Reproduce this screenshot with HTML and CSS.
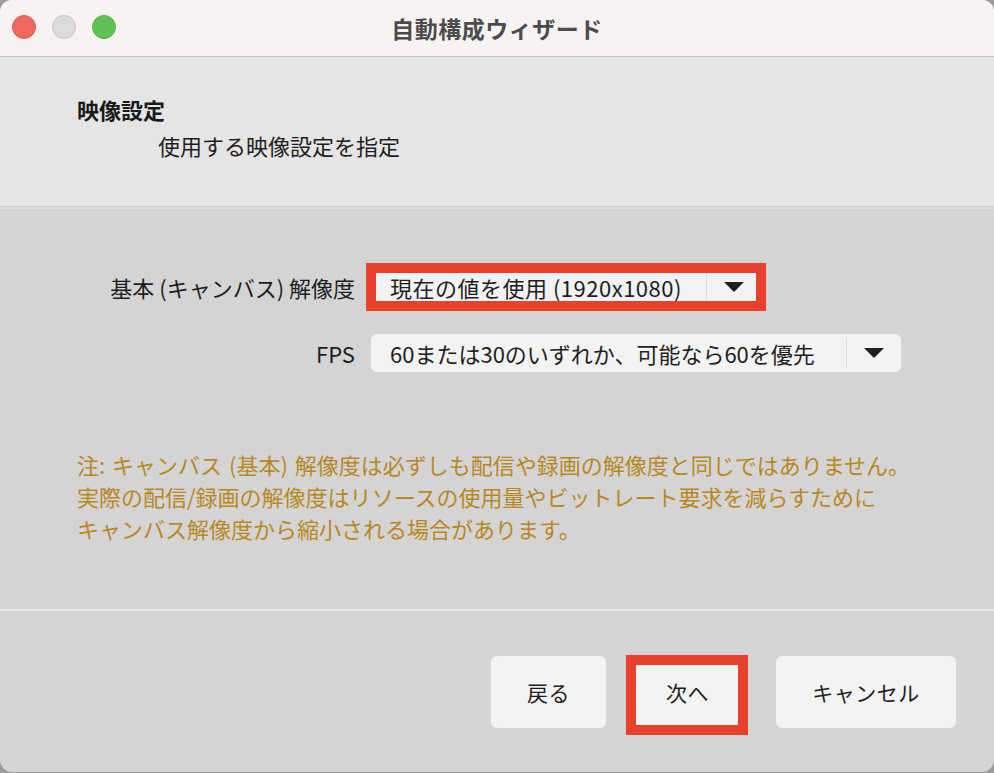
FILE: index.html
```html
<!DOCTYPE html>
<html lang="ja">
<head>
<meta charset="utf-8">
<title>自動構成ウィザード</title>
<link rel="stylesheet" href="styles.css">
</head>
<body>
<div class="window">
  <div class="titlebar">
    <div class="lights">
      <span class="light red"></span>
      <span class="light gray"></span>
      <span class="light green"></span>
    </div>
    <div class="title">自動構成ウィザード</div>
  </div>
  <div class="header">
    <div class="h-title">映像設定</div>
    <div class="h-sub">使用する映像設定を指定</div>
  </div>
  <div class="content">
    <div class="form">
      <div class="label">基本 (キャンバス) 解像度</div>
      <div class="combo combo-res highlight">
        <span class="combo-text">現在の値を使用 (1920x1080)</span>
        <span class="combo-btn"><span class="arrow"></span></span>
      </div>
      <div class="label">FPS</div>
      <div class="combo combo-fps">
        <span class="combo-text">60または30のいずれか、可能なら60を優先</span>
        <span class="combo-btn"><span class="arrow"></span></span>
      </div>
    </div>
    <div class="note">
      <div>注: キャンバス (基本) 解像度は必ずしも配信や録画の解像度と同じではありません。</div>
      <div>実際の配信/録画の解像度はリソースの使用量やビットレート要求を減らすために</div>
      <div>キャンバス解像度から縮小される場合があります。</div>
    </div>
  </div>
  <div class="footer">
    <button class="btn btn-back">戻る</button>
    <button class="btn btn-next">次へ</button>
    <button class="btn btn-cancel">キャンセル</button>
  </div>
</div>
</body>
</html>
```
FILE: styles.css
```css
* { box-sizing: border-box; }
html, body {
  margin: 0;
  padding: 0;
  width: 994px;
  height: 773px;
  background: #9c9c9c;
  overflow: hidden;
}
body {
  font-family: "Noto Sans CJK JP", "Noto Sans", sans-serif;
  color: #1e1e1e;
}
.window {
  width: 994px;
  height: 772px;
  border-radius: 12px;
  overflow: hidden;
  display: flex;
  flex-direction: column;
  background: #d4d4d4;
}
.titlebar {
  height: 57px;
  flex: none;
  background: #f6f3f2;
  border-bottom: 1px solid #c6c4c4;
  position: relative;
  display: flex;
  align-items: center;
  justify-content: center;
}
.lights {
  position: absolute;
  left: 12px;
  top: 15px;
  display: flex;
  gap: 16px;
}
.light {
  width: 24px;
  height: 24px;
  border-radius: 50%;
  display: block;
}
.light.red { background: #ee6a5f; border: 1px solid #d9574d; }
.light.gray { background: #dddbda; border: 1px solid #c8c6c5; }
.light.green { background: #5fc354; border: 1px solid #4fae45; }
.title {
  font-size: 23px;
  font-weight: 700;
  color: #4b4b4b;
  letter-spacing: 0.5px;
  margin-top: -1px;
}
.header {
  height: 150px;
  flex: none;
  background: #e5e5e5;
  border-bottom: 1px solid #cccccc;
  box-shadow: 0 2px 0 #dedede;
  padding: 37px 0 0 77px;
}
.h-title {
  font-size: 22px;
  font-weight: 700;
  line-height: 30px;
  color: #1a1a1a;
}
.h-sub {
  font-size: 22px;
  line-height: 30px;
  margin-top: 6px;
  padding-left: 81px;
  color: #1e1e1e;
}
.content {
  flex: none;
  height: 404px;
  border-bottom: 2px solid #e8e8e8;
  padding-top: 61px;
}
.form {
  display: grid;
  grid-template-columns: 355px auto;
  column-gap: 16px;
  row-gap: 28px;
  align-items: center;
  justify-items: start;
}
.label {
  justify-self: end;
  font-size: 22px;
  color: #1e1e1e;
}
.combo {
  height: 38px;
  background: #f3f3f3;
  border-radius: 6px;
  display: flex;
  align-items: center;
}
.combo-res { width: 390px; }
.combo-fps { width: 530px; }
.combo.highlight {
  border-radius: 0;
  outline: 10px solid #e8402a;
  outline-offset: -5px;
}
.combo-text {
  flex: 1;
  padding-left: 19px;
  font-size: 22px;
  white-space: nowrap;
  overflow: hidden;
}
.combo-res .combo-text { letter-spacing: 0.5px; }
.combo-btn {
  width: 55px;
  height: 30px;
  border-left: 1px solid #dcdcdc;
  display: flex;
  align-items: center;
  justify-content: center;
}
.arrow {
  width: 0;
  height: 0;
  border-left: 10px solid transparent;
  border-right: 10px solid transparent;
  border-top: 10px solid #1e1e1e;
}
.note {
  margin-top: 76px;
  padding-left: 77px;
  font-size: 22px;
  line-height: 32px;
  word-spacing: 2px;
  color: #b8881f;
}
.footer {
  flex: 1;
  display: flex;
  justify-content: flex-end;
  align-items: flex-start;
  padding: 45px 38px 0 0;
}
.btn {
  font-family: "Noto Sans CJK JP", "Noto Sans", sans-serif;
  font-size: 21px;
  letter-spacing: 0.5px;
  color: #1e1e1e;
  background: #f3f3f3;
  border: none;
  border-radius: 6px;
  height: 72px;
  padding: 0;
}
.btn-back { width: 115px; }
.btn-next {
  position: relative;
  width: 113px;
  margin: 0 32px 0 25px;
  border-radius: 0;
}
.btn-next::after {
  content: "";
  position: absolute;
  left: -5px;
  right: -4px;
  top: -1px;
  bottom: -7px;
  border: 10px solid #e8402a;
}
.btn-cancel { width: 180px; }
```
